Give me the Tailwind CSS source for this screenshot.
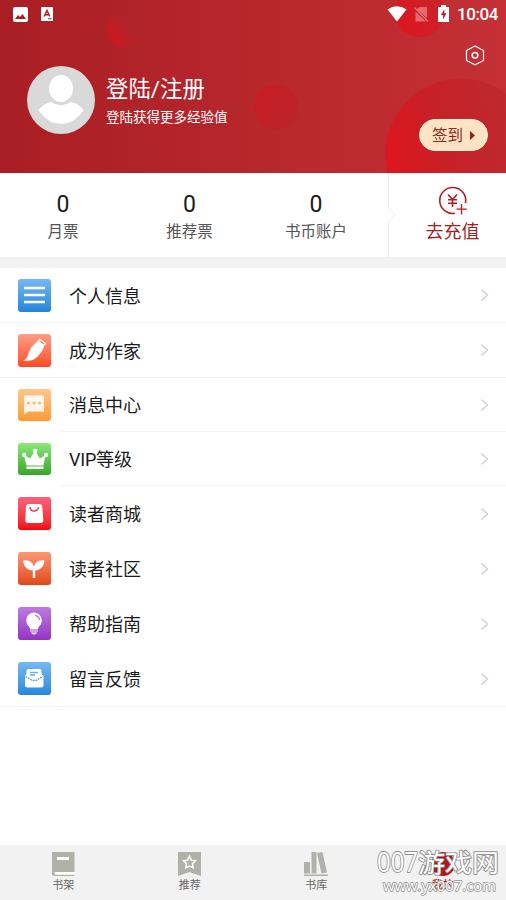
<!DOCTYPE html>
<html lang="zh-CN">
<head>
<meta charset="utf-8">
<title>个人中心</title>
<script src="https://cdn.jsdelivr.net/npm/@tailwindcss/browser@4"></script>
</head>
<body class="w-[506px] h-[900px] overflow-hidden bg-white flex flex-col font-['Roboto','Noto_Sans_CJK_SC',sans-serif] text-[#1b1b1b]">

<header class="relative h-[173px] shrink-0 overflow-hidden bg-linear-to-r from-[#a91e24] to-[#c43035] text-white">
  <!-- decorative spheres -->
  <svg class="absolute inset-0" width="506" height="173" viewBox="0 0 506 173">
    <defs>
      <linearGradient id="s1" x1=".1" y1=".85" x2=".75" y2=".35"><stop offset="0" stop-color="#d8141c"/><stop offset="1" stop-color="#b5242a" stop-opacity="0"/></linearGradient>
      <linearGradient id="s2" x1="0" y1="0" x2="1" y2=".5"><stop offset="0" stop-color="#c91b23"/><stop offset="1" stop-color="#bd232a"/></linearGradient>
      <linearGradient id="s3" x1="0" y1=".5" x2=".85" y2=".3"><stop offset="0" stop-color="#df151e"/><stop offset=".4" stop-color="#c92027"/><stop offset="1" stop-color="#bd2a30"/></linearGradient>
      <linearGradient id="s4" x1="0" y1="1" x2="1" y2=".3"><stop offset="0" stop-color="#e0131c"/><stop offset="1" stop-color="#c8252c"/></linearGradient>
    </defs>
    <circle cx="125" cy="29" r="17.500" fill="url(#s1)"/>
    <circle cx="276" cy="107" r="22.500" fill="url(#s2)"/>
    <circle cx="420" cy="12" r="25" fill="url(#s4)"/>
    <circle cx="461" cy="154" r="75.500" fill="url(#s3)"/>
  </svg>

  <div class="relative h-7 flex items-center justify-between pl-[13px] pr-[9px]">
    <div class="flex items-center gap-[13px]">
      <svg width="15" height="15" viewBox="0 0 15 15"><rect width="15" height="15" rx="2" fill="#fff"/><path d="M2 12 5 8 7 10 9.500 7 13 12Z" fill="#a91e24"/></svg>
      <svg width="12" height="14" viewBox="0 0 12 14"><rect width="12" height="14" rx="1" fill="#fff"/><path d="M3.200 9.500 6 3.500 8.800 9.500M4.300 7.700H7.700" fill="none" stroke="#a91e24" stroke-width="1.500"/><path d="M7 11.700H10.500" stroke="#a91e24"/></svg>
    </div>
    <div class="flex items-center">
      <svg width="20" height="16" viewBox="0 0 20 16"><path d="M.5 3.500Q10-3 19.500 3.500L10 15.500Z" fill="#fff"/></svg>
      <svg class="ml-[7px]" width="15" height="17" viewBox="0 0 15 17"><path d="M5.500 1H13V12L3 3.500ZM1.500 5.500 12 15.500H1.500Z" fill="#fff" fill-opacity=".35"/><path d="M.5 1.500 14 15.500" stroke="#fff" stroke-opacity=".4" stroke-width="1.200"/></svg>
      <svg class="ml-[9px] mb-[2px]" width="11" height="17" viewBox="0 0 11 17"><path d="M3 0H8V2H11V17H0V2H3Z" fill="#fff"/><path d="M6.500 4 2.800 10H5V14.500L8.500 8.300H6.300Z" fill="#bd2228"/></svg>
      <span class="ml-[8px] w-[40px] text-[17px] leading-7 font-medium tracking-[-0.4px]">10:04</span>
    </div>
  </div>

  <svg class="absolute left-[465px] top-[45px]" width="20" height="21" viewBox="0 0 20 21" fill="none" stroke="#fff" stroke-width="1.200"><path d="M10 1 18.500 5.500V15.500L10 19.800 1.500 15.500V5.500Z"/><circle cx="10" cy="10.300" r="2.800" stroke-width="1.500"/></svg>

  <div class="relative flex pl-[27px] pt-[38px]">
    <svg class="shrink-0" width="68" height="68" viewBox="0 0 68 68"><circle cx="34" cy="34" r="34" fill="#d9d9d9"/><ellipse cx="34" cy="22.500" rx="12" ry="13.500" fill="#fff"/><path d="M11.500 44.500Q15 38 24 36Q34 42.500 44 36Q53 38 56.500 44.500Q47 58 34 58Q21 58 11.500 44.500Z" fill="#fff"/></svg>
    <div class="ml-[11px] pt-[8px] whitespace-nowrap">
      <div class="text-[22.4px] leading-[30px]">登陆/注册</div>
      <div class="text-[13.5px] leading-5 mt-[3px]">登陆获得更多经验值</div>
    </div>
    <div class="ml-auto mr-[18px] mt-[53px] w-[69px] h-8 rounded-full bg-[#ffe3c2] border border-[#fff0df] flex items-center pl-[12px] text-[15.5px] text-[#8e2a25] whitespace-nowrap"><span class="pt-[3px]">签到</span><svg class="ml-[7px] mt-px" width="5" height="9" viewBox="0 0 5 9"><path d="M0 0 5 4.500 0 9Z" fill="#8e2020"/></svg></div>
  </div>
</header>

<section class="h-[84px] shrink-0 flex text-center whitespace-nowrap">
  <div class="w-[126px] pt-[18px]"><div class="text-[23px] leading-7">0</div><div class="text-[15.5px] leading-6 text-[#555] mt-px">月票</div></div>
  <div class="w-[127px] pt-[18px]"><div class="text-[23px] leading-7">0</div><div class="text-[15.5px] leading-6 text-[#555] mt-px">推荐票</div></div>
  <div class="w-[126px] pt-[18px]"><div class="text-[23px] leading-7">0</div><div class="text-[15.5px] leading-6 text-[#555] mt-px">书币账户</div></div>
  <svg class="ml-[8px] shrink-0" width="9" height="84" viewBox="0 0 9 84" fill="none" stroke="#ececec"><path d="M1.500 0V35L8 42 1.500 49V84"/></svg>
  <div class="flex-1 pt-[13px] pl-[3px] flex flex-col items-center text-[#a41e22]">
    <svg class="ml-px" width="30" height="30" viewBox="0 0 30 30" fill="none" stroke="#b01f25" stroke-width="1.600"><path d="M17 27.300A13 13 0 1 1 27.500 17"/><path d="M10 8.500 14.500 13.500 19 8.500M14.500 13.500V21M10 13.800H19M10 17.200H19" stroke-width="1.600"/><path d="M23.500 18V28.500M18.500 23.200H28.800" stroke-width="1.300"/></svg>
    <div class="text-[18px] leading-7 mt-[2px]">去充值</div>
  </div>
</section>

<div class="h-[11px] shrink-0 bg-[#f2f2f2]"></div>

<main class="text-[18px] whitespace-nowrap flex-1">
  <div class="h-[55px] flex items-center pl-[18px] pr-[17px] border-b border-[#f3f3f3]">
    <div class="size-[33px] rounded-[3px] bg-linear-to-b from-[#74b9f4] to-[#1e85da]"><svg width="33" height="33" viewBox="0 0 33 33" stroke="#fff" stroke-width="2.400"><path d="M6 9H27M6 16H27M6 23H27"/></svg></div>
    <span class="ml-[18px] pt-[2px]">个人信息</span>
    <svg class="ml-auto" width="9" height="14" viewBox="0 0 9 14" fill="none" stroke="#d2d2d2" stroke-width="1.500"><path d="M1.500 1.500 7.500 7 1.500 12.500"/></svg>
  </div>
  <div class="h-[55px] flex items-center pl-[18px] pr-[17px] border-b border-[#f3f3f3]">
    <div class="size-[33px] rounded-[3px] bg-linear-to-b from-[#ff9c86] to-[#ff481b]"><svg width="33" height="33" viewBox="0 0 33 33"><path d="M5 27Q9.500 24.500 10.500 19L13.500 13 20 6.500 26.500 11Q25 17 20 22Q15.500 26.500 12 26.500Z" fill="#fff"/><path d="M21.500 4.500 28.300 9.200 27 11.300 20.300 6.800Z" fill="#fff"/><path d="M22 7 26 9.800" stroke="#ff8063" stroke-width="1.100"/></svg></div>
    <span class="ml-[18px] pt-[2px]">成为作家</span>
    <svg class="ml-auto" width="9" height="14" viewBox="0 0 9 14" fill="none" stroke="#d2d2d2" stroke-width="1.500"><path d="M1.500 1.500 7.500 7 1.500 12.500"/></svg>
  </div>
  <div class="relative h-[54px] flex items-center pl-[18px] pr-[17px]">
    <div class="h-8 w-[33px] rounded-[3px] bg-linear-to-b from-[#ffc68b] to-[#ff9a2e]"><svg width="33" height="32" viewBox="0 0 33 32"><path d="M6 6.500H26V22.500H10L6 25.500Z" fill="#fff" fill-opacity=".88"/><g fill="#ffb968"><circle cx="10.500" cy="14" r="1.600"/><circle cx="16" cy="14" r="1.600"/><circle cx="21.500" cy="14" r="1.600"/></g></svg></div>
    <span class="ml-[18px] pt-px">消息中心</span>
    <svg class="ml-auto" width="9" height="14" viewBox="0 0 9 14" fill="none" stroke="#d2d2d2" stroke-width="1.500"><path d="M1.500 1.500 7.500 7 1.500 12.500"/></svg>
    <i class="absolute left-[60px] right-0 bottom-0 h-px bg-[#f3f3f3]"></i>
  </div>
  <div class="relative h-[54px] flex items-center pl-[18px] pr-[17px]">
    <div class="h-8 w-[33px] rounded-[3px] bg-linear-to-b from-[#8be879] to-[#39a625]"><svg width="33" height="32" viewBox="0 0 33 32" fill="#fff"><path d="M6 12 12 15.500 17 8 22 15.500 27.500 12 25.500 22.500H8.500ZM8.500 23.500H25.500V26H8.500Z"/><circle cx="6.200" cy="12" r="2.200"/><circle cx="17" cy="8" r="2.300"/><circle cx="28" cy="12" r="2.200"/></svg></div>
    <span class="ml-[18px] pt-px tracking-[-0.2px]">VIP等级</span>
    <svg class="ml-auto" width="9" height="14" viewBox="0 0 9 14" fill="none" stroke="#d2d2d2" stroke-width="1.500"><path d="M1.500 1.500 7.500 7 1.500 12.500"/></svg>
    <i class="absolute left-[60px] right-0 bottom-0 h-px bg-[#f3f3f3]"></i>
  </div>
  <div class="h-[55px] flex items-center pl-[18px] pr-[17px]">
    <div class="size-[33px] rounded-[3px] bg-linear-to-b from-[#fb6078] to-[#f10009]"><svg width="33" height="33" viewBox="0 0 33 33"><path d="M11 7H21Q24 7 24.300 10L25.300 23Q25.500 26 22.500 26H10Q7 26 7.200 23L8 10Q8.200 7 11 7Z" fill="#fff"/><path d="M12 10Q12 14 16 14T20.500 10" fill="none" stroke="#f23b4c" stroke-width="1.400"/></svg></div>
    <span class="ml-[18px] pt-[2px]">读者商城</span>
    <svg class="ml-auto" width="9" height="14" viewBox="0 0 9 14" fill="none" stroke="#d2d2d2" stroke-width="1.500"><path d="M1.500 1.500 7.500 7 1.500 12.500"/></svg>
  </div>
  <div class="h-[55px] flex items-center pl-[18px] pr-[17px]">
    <div class="size-[33px] rounded-[3px] bg-linear-to-b from-[#fa9874] to-[#e2450c]"><svg width="33" height="33" viewBox="0 0 33 33" fill="#fff"><path d="M5 8.500Q14 7 16 15Q17.500 7 26.500 8.500Q25.500 17.500 17.200 18.500V26H14.800V18.500Q6 17.500 5 8.500Z"/></svg></div>
    <span class="ml-[18px] pt-[2px]">读者社区</span>
    <svg class="ml-auto" width="9" height="14" viewBox="0 0 9 14" fill="none" stroke="#d2d2d2" stroke-width="1.500"><path d="M1.500 1.500 7.500 7 1.500 12.500"/></svg>
  </div>
  <div class="h-[55px] flex items-center pl-[18px] pr-[17px]">
    <div class="size-[33px] rounded-[3px] bg-linear-to-b from-[#bd79e0] to-[#9432c4]"><svg width="33" height="33" viewBox="0 0 33 33"><path d="M16 5.500A8 8 0 0 1 21 19.500L19.500 22.500H12.500L11 19.500A8 8 0 0 1 16 5.500ZM12 23.500H20V24.600H12ZM13 25.600H19Q18.500 27.500 16 27.500T13 25.600Z" fill="#fff"/><path d="M17 8.500Q21 9 21.500 13" fill="none" stroke="#af63d7" stroke-width="1.200"/></svg></div>
    <span class="ml-[18px] pt-[2px]">帮助指南</span>
    <svg class="ml-auto" width="9" height="14" viewBox="0 0 9 14" fill="none" stroke="#d2d2d2" stroke-width="1.500"><path d="M1.500 1.500 7.500 7 1.500 12.500"/></svg>
  </div>
  <div class="h-[56px] flex items-center pl-[18px] pr-[17px] border-b border-[#f3f3f3]">
    <div class="size-[33px] rounded-[3px] bg-linear-to-b from-[#75b9f2] to-[#2388dc]"><svg width="33" height="33" viewBox="0 0 33 33"><path d="M10 7H22.500L23.500 8.500V12L25.500 13.500V23Q25.500 25.500 23 25.500H9.500Q7 25.500 7 23V13.500L8.500 12V8.500Z" fill="#fff"/><path d="M12 10.500H20M12 13H17" stroke="#69aeea" stroke-width="1.500"/><path d="M7.500 14.500 14 18.300H18.500L25 14.500" fill="none" stroke="#4b9fe3" stroke-width="1.200" stroke-dasharray="2 .7"/></svg></div>
    <span class="ml-[18px] pt-[2px]">留言反馈</span>
    <svg class="ml-auto" width="9" height="14" viewBox="0 0 9 14" fill="none" stroke="#d2d2d2" stroke-width="1.500"><path d="M1.500 1.500 7.500 7 1.500 12.500"/></svg>
  </div>
</main>

<nav class="relative h-[55px] shrink-0 bg-[#f2f2f2] grid grid-cols-4 text-[11px] leading-4 text-[#666] text-center">
  <div class="pt-[7px] flex flex-col items-center"><svg width="23" height="24" viewBox="0 0 23 24"><path d="M0 0H22.500V24H2.500Q0 24 0 21.500Z" fill="#b0b2a9"/><path d="M5 5H17V8H5ZM3 20H23V22.700H3Q1.700 21.300 3 20Z" fill="#fff"/></svg><span class="mt-[2px]">书架</span></div>
  <div class="pt-[7px] flex flex-col items-center"><svg width="23" height="24" viewBox="0 0 23 24"><path d="M0 0H23V24L11.500 20 0 24Z" fill="#b0b2a9"/><path d="M11.500 4.300 13.500 8.200 17.500 8.800 14.500 11.700 15.200 15.800 11.500 14 7.800 15.800 8.500 11.700 5.500 8.800 9.500 8.200Z" fill="none" stroke="#fff" stroke-width="1.500"/></svg><span class="mt-[2px]">推荐</span></div>
  <div class="pt-[7px] flex flex-col items-center"><svg width="24" height="24" viewBox="0 0 24 24" fill="#b0b2a9"><path d="M0 10H6V21.500H0ZM7.500 0H12.500V21.500H7.500ZM13 1 18.500 0 23 20.500 17.500 21.500ZM0 22.500H24V24H0Z"/></svg><span class="mt-[2px]">书库</span></div>
  <div class="pt-[7px] flex flex-col items-center"><svg width="24" height="24" viewBox="0 0 24 24"><circle cx="12" cy="12" r="12" fill="#b3131a"/></svg><span class="mt-[2px] text-[#b3131a] font-medium">我的</span></div>
  <!-- site mark over the last tab -->
  <svg class="absolute left-[370px] top-0 overflow-visible" width="136" height="55" viewBox="0 0 136 55" fill="#fff" stroke="#909090" stroke-width="1.800" stroke-linejoin="round">
    <text x="7" y="27" font-size="27" textLength="41" lengthAdjust="spacingAndGlyphs" paint-order="stroke" font-family="Open Sans, sans-serif">007</text>
    <text x="48" y="26.500" font-size="25" textLength="81" lengthAdjust="spacingAndGlyphs" paint-order="stroke" font-family="Noto Sans CJK SC, sans-serif">游戏网</text>
    <text x="13" y="45.500" font-size="15" stroke-width="1.500" textLength="113" lengthAdjust="spacingAndGlyphs" paint-order="stroke" font-family="Open Sans, sans-serif">www.yx007.com</text>
  </svg>
</nav>
</body>
</html>
